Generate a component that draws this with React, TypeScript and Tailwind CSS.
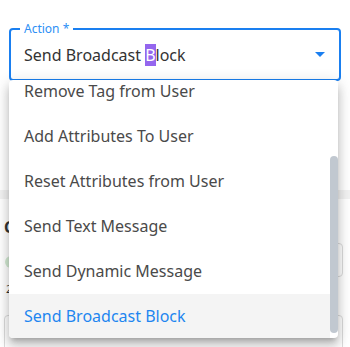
import React from "react";

const items = [
  "Remove Tag from User",
  "Add Attributes To User",
  "Reset Attributes from User",
  "Send Text Message",
  "Send Dynamic Message",
  "Send Broadcast Block",
];

export default function App() {
  return (
    <div className="relative w-[350px] h-[347px] overflow-hidden bg-white font-['Noto_Sans','Open_Sans',sans-serif]">
      {/* Field */}
      <div className="pt-[28px] px-[9px]">
        <div className="relative h-[53px] rounded-[4px] border-2 border-[#1a7ff0] flex items-center pl-[13px] pr-[12px]">
          <span className="absolute top-[-9px] left-[9px] px-[4px] bg-white text-[12px] leading-[16px] text-[#2d8ff5]">
            Action *
          </span>
          <span className="flex-1 text-[16px] leading-[22px] text-[#333]">
            Send Broadcast <span className="bg-[#9466ee] text-white">B</span>lock
          </span>
          <svg width="10" height="5" viewBox="0 0 10 5" className="mr-[2px]">
            <path d="M0 0 L5 5 L10 0 Z" fill="#1a7ff0" />
          </svg>
        </div>
      </div>

      {/* Background content */}
      <div className="mt-[109px] h-[9px] bg-[#f2f2f2]" />
      <div className="px-[4px] pt-[18px]">
        <div className="text-[16px] leading-[20px] font-bold text-[#333]">C</div>
        <div className="mt-[6px] flex items-start justify-between">
          <div className="pt-[13px] flex flex-col">
            <div className="w-[12px] h-[12px] rounded-full bg-[#d3ead3] ml-[1px]" />
            <div className="text-[11px] leading-[14px] text-[#333] mt-[14px] ml-[2px]">2</div>
          </div>
          <div className="w-[150px] h-[34px] rounded-[4px] border border-[#dcdcdc] mr-[3px]" />
        </div>
        <div className="mt-[19px] h-[60px] rounded-[4px] border border-[#dcdcdc] mr-[3px]" />
      </div>

      {/* Menu */}
      <div className="absolute left-[9px] top-[80px] w-[329px] h-[258px] overflow-hidden rounded-[4px] bg-white shadow-[0_5px_5px_-3px_rgba(0,0,0,0.2),0_8px_10px_1px_rgba(0,0,0,0.14),0_3px_14px_2px_rgba(0,0,0,0.12)]">
        <ul className="mt-[-11.5px] w-[321px]">
          {items.map((t, i) => {
            const sel = i === items.length - 1;
            return (
              <li
                key={t}
                className={
                  sel
                    ? "h-[45px] flex items-center px-[15px] text-[16px] text-[#1e86f0] bg-[#f4f4f4]"
                    : "h-[45px] flex items-center px-[15px] text-[16px] text-[#4a4a4a]"
                }
              >
                {t}
              </li>
            );
          })}
        </ul>
        <div className="absolute left-[321px] top-[76px] w-[8px] h-[177px] rounded-[4px] bg-[#c1c8d0]" />
      </div>
    </div>
  );
}
